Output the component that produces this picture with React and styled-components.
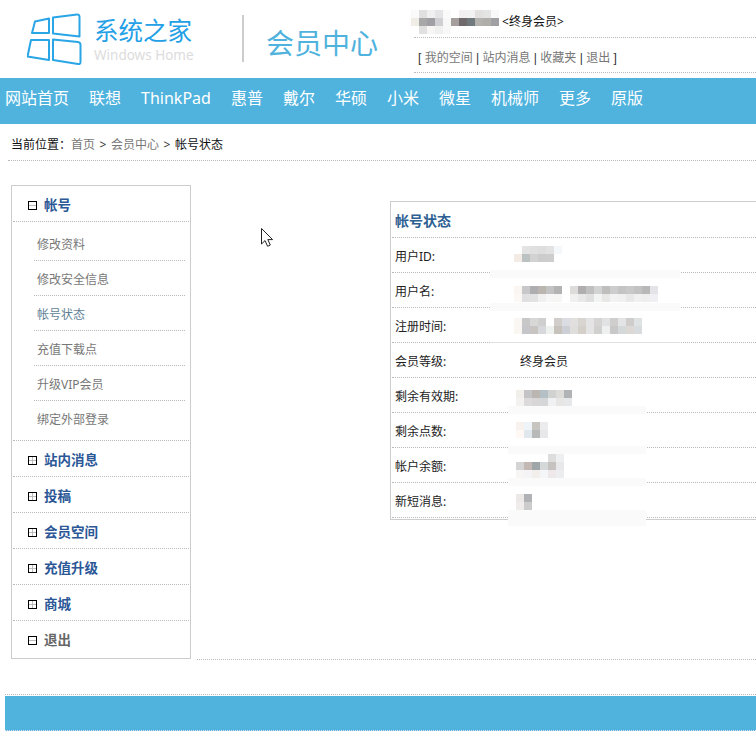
import React from "react";
import styled, { createGlobalStyle } from "styled-components";

const FONT = `"Noto Sans", "Noto Sans CJK SC", sans-serif`;
const BLUE = "#4fb3de";

const Global = createGlobalStyle`
  html, body { margin: 0; padding: 0; background: #fff; overflow-x: hidden; }
  body { font-family: ${FONT}; font-size: 12px; color: #222; }
  * { box-sizing: border-box; }
`;

const Page = styled.div`
  position: relative;
  width: 756px;
  height: 737px;
  overflow: hidden;
`;

/* header */
const Header = styled.header`
  display: flex;
  height: 78px;
  padding-left: 27px;
`;
const LogoMark = styled.svg`
  width: 56px;
  height: 54px;
  margin-top: 13px;
  flex: none;
`;
const Brand = styled.div`
  display: flex;
  flex-direction: column;
  margin-left: 11px;
  padding-top: 14px;
  width: 100px;
`;
const BrandName = styled.div`
  font-size: 24.5px;
  line-height: 34px;
  color: #23a0e6;
  white-space: nowrap;
`;
const BrandSub = styled.div`
  font-size: 13.5px;
  line-height: 14px;
  color: #dcdcdc;
  white-space: nowrap;
`;
const Divider = styled.div`
  width: 2px;
  height: 47px;
  margin: 15px 0 0 48px;
  background: #ccc;
`;
const CenterTitle = styled.div`
  margin-left: 22px;
  padding-top: 22px;
  font-size: 28px;
  line-height: 42px;
  color: ${BLUE};
  white-space: nowrap;
`;
const UserBlock = styled.div`
  flex: 1;
  margin-left: 36px;
`;
const UserLine = styled.div`
  position: relative;
  height: 38px;
  padding: 14px 0 0 88px;
  line-height: 16px;
  font-size: 12px;
  color: #111;
  border-bottom: 1px dotted #bbb;
`;
const UserMosaic = styled.div`
  position: absolute;
  left: -3px;
  top: 10px;
  line-height: 0;
`;
const LinkLine = styled.div`
  height: 35px;
  padding: 12px 0 0 4px;
  line-height: 16px;
  font-family: "Liberation Sans", "Noto Sans CJK SC", sans-serif;
  font-size: 12px;
  color: #333;
  white-space: pre;
  border-bottom: 1px dotted #bbb;
`;
const TopLink = styled.span`
  color: #777;
`;

/* nav */
const Nav = styled.nav`
  display: flex;
  gap: 20px;
  height: 46px;
  padding: 0 0 6px 5px;
  align-items: center;
  background: ${BLUE};
`;
const NavItem = styled.span`
  font-size: 16px;
  line-height: 40px;
  color: #fff;
  white-space: nowrap;
`;

/* breadcrumb */
const Crumbs = styled.div`
  display: flex;
  height: 37px;
  margin-left: 8px;
  padding: 13px 0 0 3px;
  line-height: 16px;
  font-size: 12px;
  border-bottom: 1px dotted #bbb;
  color: #111;
`;
const CrumbLink = styled.span`
  color: #777;
`;
const CrumbSep = styled.span`
  width: 16px;
  text-align: center;
  color: #333;
`;

/* main */
const Main = styled.main`
  display: flex;
  margin-top: 24px;
  padding-left: 11px;
`;
const Sidebar = styled.aside`
  flex: none;
  width: 180px;
  height: 474px;
  border: 1px solid #ccc;
`;
const Group = styled.div`
  margin: 0 1px;
  height: 36px;
  padding: 2px 0 0 15px;
  display: flex;
  align-items: center;
  gap: 7px;
  border-bottom: ${(p) => (p.$last ? "none" : "1px dotted #bbb")};
`;
const GroupLabel = styled.span`
  font-size: 13.5px;
  font-weight: 700;
  line-height: 18px;
  color: ${(p) => (p.$muted ? "#666" : "#2b5797")};
`;
const Toggle = styled.svg`
  width: 9px;
  height: 9px;
  flex: none;
  margin-top: 1px;
`;
const SubList = styled.div`
  margin: 0 1px;
  padding: 4px 4px 4px 21px;
  border-bottom: 1px dotted #bbb;
`;
const SubItem = styled.div`
  height: 35px;
  padding: 11px 0 0 3px;
  line-height: 16px;
  font-size: 12px;
  color: ${(p) => (p.$active ? "#5f7f96" : "#777")};
  border-bottom: ${(p) => (p.$last ? "none" : "1px dotted #bbb")};
`;

const Content = styled.section`
  flex: 1;
  min-width: 0;
  margin-left: 6px;
  height: 475px;
  padding: 16px 0 0 193px;
  border-bottom: 1px dotted #bbb;
`;
const Panel = styled.div`
  position: relative;
  height: 319px;
  border: 1px solid #ccc;
  border-right: none;
`;
const PanelTitle = styled.h2`
  margin: 0 0 0 1px;
  height: 36px;
  padding: 10px 0 0 3px;
  font-size: 14px;
  line-height: 18px;
  font-weight: 700;
  color: #2e5f92;
  border-bottom: 1px dotted #bbb;
`;
const Row = styled.div`
  display: flex;
  height: 35px;
  margin-left: 1px;
  padding: 11px 0 0 3px;
  line-height: 16px;
  font-size: 12px;
  color: #222;
  border-bottom: 1px dotted #bbb;
`;
const RowLabel = styled.span`
  flex: none;
  width: 125px;
`;
const RowValue = styled.span`
  position: relative;
  flex: 1;
`;
const ValueMosaic = styled.div`
  position: absolute;
  left: ${(p) => p.$x}px;
  top: ${(p) => p.$y}px;
  line-height: 0;
`;
const Band = styled.div`
  position: absolute;
  left: ${(p) => p.$x}px;
  top: ${(p) => p.$y}px;
  width: ${(p) => p.$w}px;
  height: ${(p) => p.$h}px;
  background: ${(p) => p.$c || "#fafafa"};
`;

/* footer */
const Footer = styled.footer`
  margin: 34px 0 0 5px;
  padding-top: 1px;
  border-top: 1px dotted #bbb;
`;
const FooterBar = styled.div`
  height: 35px;
  background: ${BLUE};
  border-bottom: 1px dotted #dde;
`;

const Cursor = styled.svg`
  position: absolute;
  left: 260px;
  top: 227px;
  width: 15px;
  height: 21px;
`;

function Mosaic({ rows }) {
  const cols = Math.max(...rows.map((r) => r.length));
  return (
    <svg width={cols * 8} height={rows.length * 8} shapeRendering="crispEdges">
      {rows.flatMap((r, y) =>
        r.map((c, x) =>
          c ? <rect key={`${x}-${y}`} x={x * 8} y={y * 8} width="8" height="8" fill={`#${c}`} /> : null
        )
      )}
    </svg>
  );
}

function ToggleIcon({ open }) {
  return (
    <Toggle viewBox="0 0 9 9" shapeRendering="crispEdges">
      <rect x="0.5" y="0.5" width="8" height="8" fill="#fff" stroke="#000" />
      <rect x="1" y="4" width="7" height="1" fill="#bbb" />
      {!open && <rect x="4" y="1" width="1" height="7" fill="#bbb" />}
    </Toggle>
  );
}

const nav = ["网站首页", "联想", "ThinkPad", "惠普", "戴尔", "华硕", "小米", "微星", "机械师", "更多", "原版"];
const subs = ["修改资料", "修改安全信息", "帐号状态", "充值下载点", "升级VIP会员", "绑定外部登录"];
const groups = ["站内消息", "投稿", "会员空间", "充值升级", "商城"];

const userMosaic = [
  ["fafafa", "e0e0e0", "f0f0f0", "e4e4e6", "fafafa", null, "f2f0f0", "f2f2f2", "e2e0de", "e4e4e2", "f8f8f8"],
  ["f0ece6", "a8a8a8", "a0a0a4", "d0d0d4", "f8f8f8", "a49e9c", "706a6c", "707a7c", "b4b2ae", "b0aeaa", "a0a0a4"],
  [null, "e0e0e0", "f8f6f4", "f0f0f0", "f8f8f8"],
];

const rows = [
  { label: "用户ID:", x: -6, y: -3, m: [
    [null, "e3e3e3", "e0e0e0", "dedede", "e2e2e2", "f5f8fb"],
    ["f3ece6", "bcc2c2", "d2d2d2", "cccccc", "cdcdcd"],
  ] },
  { label: "用户名:", x: -6, y: 2, m: [
    ["fbf6f2", "c8c8ca", "aeaeb0", "bbb5b0", "c3c3c3", "b3b3b3", null, "dedcda", "b0aeae", "c0c0c0", "d2d4d4", "c0bebc", "cdcdcd", "c4c4c4", "c8c8c8", "c2c2c2", "b8b8b8", "e4e4e8"],
    ["fcf8f6", "e0e0e2", "e2e2e2", "f0f0f0", "f6f6f6", "f6f6f4", null, "f0f0f0", "e8e8e8", "e0e0e0", "f2f4f4", "e8e8e6", "f2f2f2", "f0f0f0", "e8e8e8", "f0f0f0", "eeeeee", "f0f0f4"],
  ] },
  { label: "注册时间:", x: -6, y: -1, m: [
    ["faf6f4", "c8c8c8", "d8d8d6", "cfcfcf", null, "d0cdcb", "dcdde2", "e2e0de", "d8d4d0", "e4e4e4", "d6d4d2", "e0e2e4", "d0cecc", "e2e4e6", "cfcccc", "dfe2e2"],
    ["faf6f2", "c4c6ca", "c8c4c2", "d6d8dc", "eef2ee", "c8c2bc", "ccd0d6", "e0dedc", "d4cfc9", "e4e4e4", "d0d0ce", "eef0f0", "c8c8c8", "d4d8d8", "dcd8d6", "d8dcde"],
  ] },
  { label: "会员等级:", text: "终身会员" },
  { label: "剩余有效期:", x: -4, y: 1, m: [
    ["f2eeea", "c4c4c6", "bcb6b2", "b4c0c6", "d0d2d2", "dedcd8", "b0b4b6"],
    ["f4f2f0", "dcdadb", "d8d6d6", "d4d6d8", "eff1f2", "e8e6e4", "e6e8ea"],
  ] },
  { label: "剩余点数:", x: -4, y: -2, m: [
    ["f8f2ee", "eef4f8", "c8c4c0", "ececee"],
    ["fff8f4", "e0e8ee", "b8baba", "e8e8ea"],
  ] },
  { label: "帐户余额:", x: -4, y: -5, m: [
    [null, null, null, null, "dddddd", "eeeff0"],
    ["d4d4d4", "c4b8b4", "9ea6aa", "d4d8d8", "c6c2c0", "e8e8ea"],
    ["f8f6f4", "f4f4f6", "f2eeec", "f4f6f8", "eee8ea", "ecedee"],
  ] },
  { label: "新短消息:", x: -4, y: 0, m: [
    ["ece8e6", "b0b2b6"],
    ["f0ecec", "cccccc"],
  ] },
];

export default function App() {
  return (
    <Page>
      <Global />
      <Header>
        <LogoMark viewBox="27 13 56 54" fill="none" stroke="#2aa5e6" strokeWidth="2" strokeLinejoin="round">
          <path d="M35 21.5 L49 18.5 V33 H32 Z" />
          <path d="M53 17.5 L77 14.5 Q79.5 14.3 79.5 17 V36.5 L53 33.5 Z" />
          <path d="M31 40 H49 V60 L27.5 56.5 Z" />
          <path d="M53 39.5 L78 42 Q80.5 42.3 80.5 45 V62 Q80.5 64.5 78 64 L53 60 Z" />
        </LogoMark>
        <Brand>
          <BrandName>系统之家</BrandName>
          <BrandSub>Windows Home</BrandSub>
        </Brand>
        <Divider />
        <CenterTitle>会员中心</CenterTitle>
        <UserBlock>
          <UserLine>
            <UserMosaic><Mosaic rows={userMosaic} /></UserMosaic>
            &lt;终身会员&gt;
          </UserLine>
          <LinkLine>
            {"[ "}<TopLink>我的空间</TopLink>{" | "}<TopLink>站内消息</TopLink>{" | "}<TopLink>收藏夹</TopLink>{" | "}<TopLink>退出</TopLink>{" ]"}
          </LinkLine>
        </UserBlock>
      </Header>

      <Nav>
        {nav.map((n) => <NavItem key={n}>{n}</NavItem>)}
      </Nav>

      <Crumbs>
        <span>当前位置：</span>
        <CrumbLink>首页</CrumbLink>
        <CrumbSep>&gt;</CrumbSep>
        <CrumbLink>会员中心</CrumbLink>
        <CrumbSep>&gt;</CrumbSep>
        <span>帐号状态</span>
      </Crumbs>

      <Main>
        <Sidebar>
          <Group>
            <ToggleIcon open />
            <GroupLabel>帐号</GroupLabel>
          </Group>
          <SubList>
            {subs.map((s, i) => (
              <SubItem key={s} $active={i === 2} $last={i === subs.length - 1}>{s}</SubItem>
            ))}
          </SubList>
          {groups.map((g) => (
            <Group key={g}>
              <ToggleIcon />
              <GroupLabel>{g}</GroupLabel>
            </Group>
          ))}
          <Group $last>
            <ToggleIcon open />
            <GroupLabel $muted>退出</GroupLabel>
          </Group>
        </Sidebar>

        <Content>
          <Panel>
            <PanelTitle>帐号状态</PanelTitle>
            {rows.map((r) => (
              <Row key={r.label}>
                <RowLabel>{r.label}</RowLabel>
                <RowValue>
                  {r.text}
                  {r.m && <ValueMosaic $x={r.x} $y={r.y}><Mosaic rows={r.m} /></ValueMosaic>}
                </RowValue>
              </Row>
            ))}
            <Band $x={99} $y={68} $w={190} $h={8} />
            <Band $x={99} $y={101} $w={190} $h={8} />
            <Band $x={99} $y={140} $w={190} $h={1} $c="#e2e2e2" />
            <Band $x={117} $y={204} $w={138} $h={8} />
            <Band $x={117} $y={244} $w={138} $h={8} />
            <Band $x={117} $y={276} $w={138} $h={8} />
            <Band $x={117} $y={308} $w={138} $h={16} />
          </Panel>
        </Content>
      </Main>

      <Footer>
        <FooterBar />
      </Footer>

      <Cursor viewBox="0 0 15 21">
        <path d="M1.5 1.5 V17 L5 13.6 L7.6 19.3 L10.3 18 L7.8 12.6 H12.6 Z" fill="#fff" stroke="#222" strokeWidth="1" strokeLinejoin="miter" />
      </Cursor>
    </Page>
  );
}
